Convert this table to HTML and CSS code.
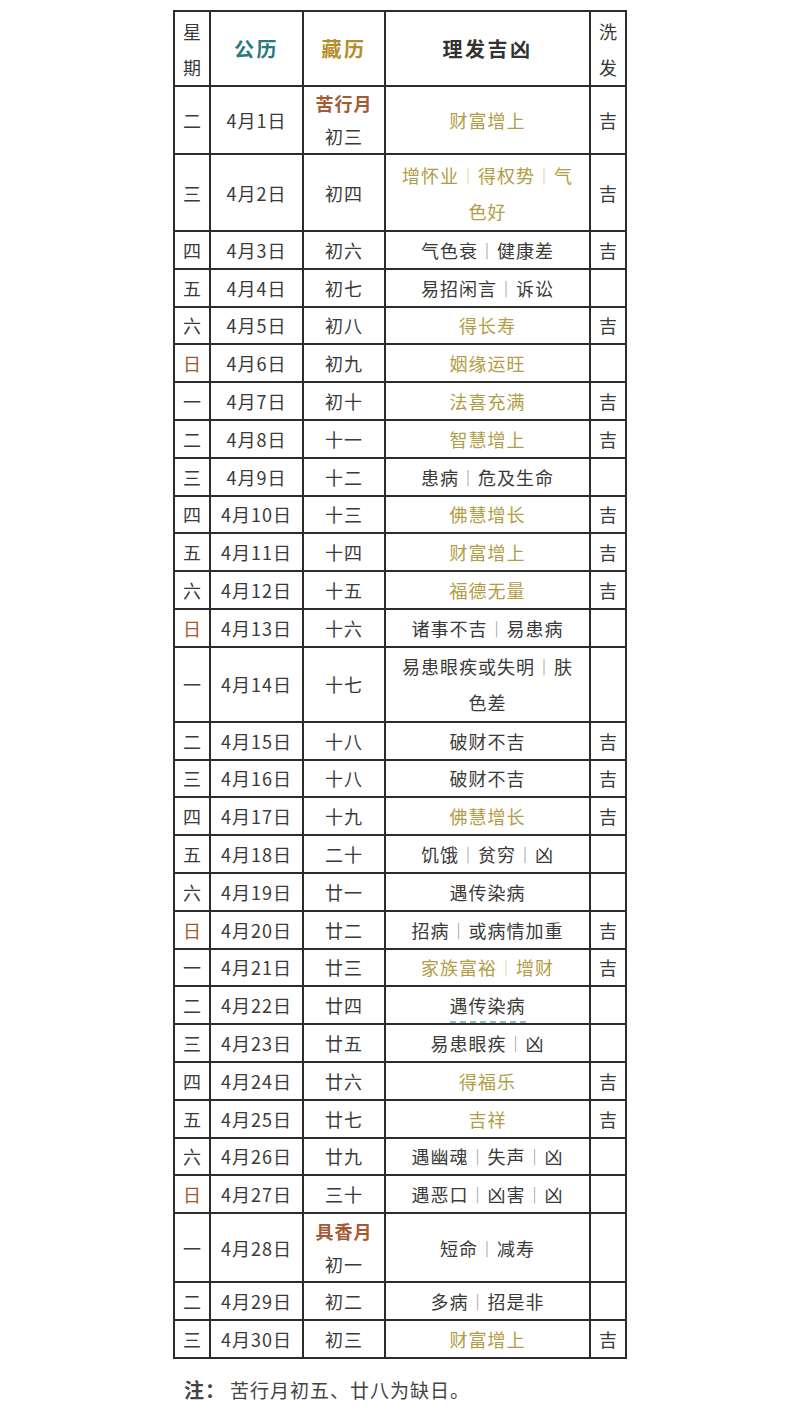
FILE: index.html
```html
<!DOCTYPE html>
<html lang="zh">
<head>
<meta charset="utf-8">
<title>理发吉凶</title>
<link rel="stylesheet" href="styles.css">
</head>
<body>
<div class="wrap">
<table class="cal">
  <colgroup>
    <col class="c1"><col class="c2"><col class="c3"><col class="c4"><col class="c5">
  </colgroup>
  <thead>
    <tr class="head">
      <th class="narrow">星<br>期</th>
      <th class="h-teal">公历</th>
      <th class="h-gold">藏历</th>
      <th class="h-dark">理发吉凶</th>
      <th class="narrow">洗<br>发</th>
    </tr>
  </thead>
  <tbody>
    <tr class="r-month"><td>二</td><td>4月1日</td><td class="month"><span class="mname">苦行月</span><br>初三</td><td class="gold">财富增上</td><td>吉</td></tr>
    <tr class="r-two"><td>三</td><td>4月2日</td><td>初四</td><td class="gold two">增怀业<span class="sep">丨</span>得权势<span class="sep">丨</span>气<br>色好</td><td>吉</td></tr>
    <tr><td>四</td><td>4月3日</td><td>初六</td><td>气色衰<span class="sep">丨</span>健康差</td><td>吉</td></tr>
    <tr><td>五</td><td>4月4日</td><td>初七</td><td>易招闲言<span class="sep">丨</span>诉讼</td><td></td></tr>
    <tr><td>六</td><td>4月5日</td><td>初八</td><td class="gold">得长寿</td><td>吉</td></tr>
    <tr><td class="sun">日</td><td>4月6日</td><td>初九</td><td class="gold">姻缘运旺</td><td></td></tr>
    <tr><td>一</td><td>4月7日</td><td>初十</td><td class="gold">法喜充满</td><td>吉</td></tr>
    <tr><td>二</td><td>4月8日</td><td>十一</td><td class="gold">智慧增上</td><td>吉</td></tr>
    <tr><td>三</td><td>4月9日</td><td>十二</td><td>患病<span class="sep">丨</span>危及生命</td><td></td></tr>
    <tr><td>四</td><td>4月10日</td><td>十三</td><td class="gold">佛慧增长</td><td>吉</td></tr>
    <tr><td>五</td><td>4月11日</td><td>十四</td><td class="gold">财富增上</td><td>吉</td></tr>
    <tr><td>六</td><td>4月12日</td><td>十五</td><td class="gold">福德无量</td><td>吉</td></tr>
    <tr><td class="sun">日</td><td>4月13日</td><td>十六</td><td>诸事不吉<span class="sep">丨</span>易患病</td><td></td></tr>
    <tr class="r-two2"><td>一</td><td>4月14日</td><td>十七</td><td class="two">易患眼疾或失明<span class="sep">丨</span>肤<br>色差</td><td></td></tr>
    <tr><td>二</td><td>4月15日</td><td>十八</td><td>破财不吉</td><td>吉</td></tr>
    <tr><td>三</td><td>4月16日</td><td>十八</td><td>破财不吉</td><td>吉</td></tr>
    <tr><td>四</td><td>4月17日</td><td>十九</td><td class="gold">佛慧增长</td><td>吉</td></tr>
    <tr><td>五</td><td>4月18日</td><td>二十</td><td>饥饿<span class="sep">丨</span>贫穷<span class="sep">丨</span>凶</td><td></td></tr>
    <tr><td>六</td><td>4月19日</td><td>廿一</td><td>遇传染病</td><td></td></tr>
    <tr><td class="sun">日</td><td>4月20日</td><td>廿二</td><td>招病<span class="sep">丨</span>或病情加重</td><td>吉</td></tr>
    <tr><td>一</td><td>4月21日</td><td>廿三</td><td class="gold">家族富裕<span class="sep">丨</span>增财</td><td>吉</td></tr>
    <tr><td>二</td><td>4月22日</td><td>廿四</td><td><span class="dashed">遇传染病</span></td><td></td></tr>
    <tr><td>三</td><td>4月23日</td><td>廿五</td><td>易患眼疾<span class="sep">丨</span>凶</td><td></td></tr>
    <tr><td>四</td><td>4月24日</td><td>廿六</td><td class="gold">得福乐</td><td>吉</td></tr>
    <tr><td>五</td><td>4月25日</td><td>廿七</td><td class="gold">吉祥</td><td>吉</td></tr>
    <tr><td>六</td><td>4月26日</td><td>廿九</td><td>遇幽魂<span class="sep">丨</span>失声<span class="sep">丨</span>凶</td><td></td></tr>
    <tr><td class="sun">日</td><td>4月27日</td><td>三十</td><td>遇恶口<span class="sep">丨</span>凶害<span class="sep">丨</span>凶</td><td></td></tr>
    <tr class="r-month2"><td>一</td><td>4月28日</td><td class="month"><span class="mname">具香月</span><br>初一</td><td>短命<span class="sep">丨</span>减寿</td><td></td></tr>
    <tr><td>二</td><td>4月29日</td><td>初二</td><td>多病<span class="sep">丨</span>招是非</td><td></td></tr>
    <tr><td>三</td><td>4月30日</td><td>初三</td><td class="gold">财富增上</td><td>吉</td></tr>
  </tbody>
</table>
<p class="note"><b>注：</b>苦行月初五、廿八为缺日。</p>
</div>
</body>
</html>
```

FILE: styles.css
```css
html, body {
  margin: 0;
  padding: 0;
  background: #ffffff;
}

body {
  font-family: "Noto Sans CJK SC", "Noto Sans", sans-serif;
  color: #3a3a3a;
}

.wrap {
  padding-top: 10px;
}

.cal {
  margin: 0 auto;
  border-collapse: collapse;
  table-layout: fixed;
  width: 452px;
}

.c1 { width: 36px; }
.c2 { width: 93px; }
.c3 { width: 82px; }
.c4 { width: 205px; }
.c5 { width: 36px; }

.cal th,
.cal td {
  border: 2px solid #2c2c2c;
  text-align: center;
  vertical-align: middle;
  padding: 0 6px;
  font-size: 18px;
  line-height: 32px;
  letter-spacing: 1px;
  font-weight: 400;
}

.cal td:first-child,
.cal td:last-child,
.cal th.narrow {
  padding: 0;
  letter-spacing: 0;
}

.cal tbody tr {
  height: 37.8px;
}

.cal tr.head {
  height: 75px;
}

.cal th.narrow {
  line-height: 36px;
}

.cal th.h-teal,
.cal th.h-gold,
.cal th.h-dark {
  font-size: 20px;
  font-weight: 700;
  letter-spacing: 2.5px;
}

.h-teal { color: #2a7a82; }
.h-gold { color: #b38f2c; }
.h-dark { color: #333333; }

.cal tr.r-month { height: 68px; }
.cal tr.r-two { height: 77px; }
.cal tr.r-two2 { height: 75px; }
.cal tr.r-month2 { height: 69px; }

.cal td.two {
  line-height: 36px;
}

.cal td.month {
  line-height: 33px;
}

.mname {
  color: #a45a34;
  font-weight: 700;
}

.gold {
  color: #b29c46;
}

.sun {
  color: #a0582b;
  font-weight: 700;
}

.sep {
  opacity: 0.45;
  font-weight: 300;
}

.dashed {
  border-bottom: 2px dashed #8fc4c4;
  padding-bottom: 3px;
}

.note {
  width: 452px;
  margin: 17px auto 0;
  padding: 0 0 0 10px;
  box-sizing: border-box;
  font-size: 19px;
  line-height: 28px;
  color: #444444;
  letter-spacing: 1px;
}

.note b {
  font-weight: 700;
  font-size: 20px;
  margin-right: 4px;
}
```
